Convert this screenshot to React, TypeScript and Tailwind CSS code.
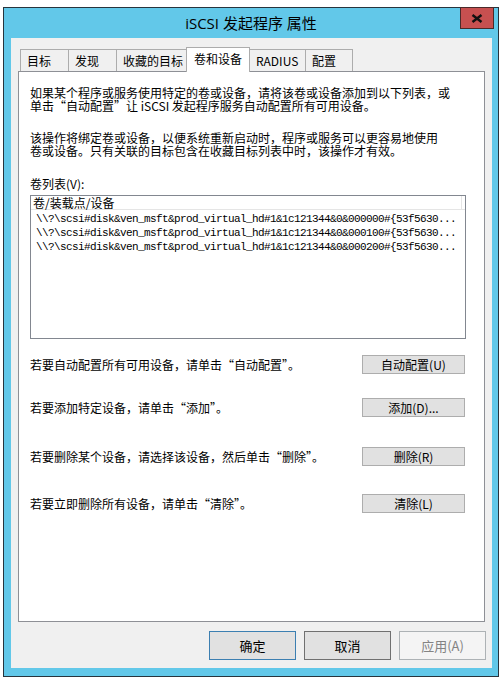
import React from "react";

const cjk = { fontFamily: '"Noto Sans CJK SC", "Noto Sans", sans-serif' };
const ui = { fontFamily: '"Open Sans", "Noto Sans CJK SC", sans-serif' };
const mono = { fontFamily: '"Liberation Mono", "Noto Sans CJK SC", monospace' };

const tabs = [
  { label: "目标", w: "w-[49px]" },
  { label: "发现", w: "w-[49px]" },
  { label: "收藏的目标", w: "w-[71px]" },
  { label: "卷和设备", w: "w-[64px]", active: true },
  { label: "RADIUS", w: "w-[57px]" },
  { label: "配置", w: "w-[48px]" },
];

const volumes = [
  "\\\\?\\scsi#disk&ven_msft&prod_virtual_hd#1&1c121344&0&000000#{53f5630...",
  "\\\\?\\scsi#disk&ven_msft&prod_virtual_hd#1&1c121344&0&000100#{53f5630...",
  "\\\\?\\scsi#disk&ven_msft&prod_virtual_hd#1&1c121344&0&000200#{53f5630...",
];

const actions = [
  { text: "若要自动配置所有可用设备，请单击“自动配置”。", btn: "自动配置(U)", mt: "mt-[16px]" },
  { text: "若要添加特定设备，请单击“添加”。", btn: "添加(D)...", mt: "mt-[24px]" },
  { text: "若要删除某个设备，请选择该设备，然后单击“删除”。", btn: "删除(R)", mt: "mt-[30px]" },
  { text: "若要立即删除所有设备，请单击“清除”。", btn: "清除(L)", mt: "mt-[28px]" },
];

function Lines({ lines, className }: { lines: string[]; className?: string }) {
  return (
    <div className={className}>
      {lines.map((l) => (
        <div key={l} className="h-[13px] leading-[13px] whitespace-nowrap">
          {l}
        </div>
      ))}
    </div>
  );
}

export default function App() {
  return (
    <div className="w-[504px] h-[686px] bg-white pt-[7px] pl-[3px]">
      <div className="relative w-[496px] h-[670px] border border-[#27343d] bg-[#62c8e9] flex flex-col">
        {/* title bar */}
        <div className="h-[30px] flex items-center justify-center text-[15px] text-black" style={ui}>
          iSCSI 发起程序 属性
        </div>
        <div className="absolute top-[-1px] right-[4px] w-[34px] h-[22px] bg-[#c75050] border border-[#4a2a2a] flex items-center justify-center">
          <svg width="12" height="9" viewBox="0 0 12 9">
            <path d="M1.5 1 L10.5 8 M10.5 1 L1.5 8" stroke="#111" strokeWidth="2.4" />
          </svg>
        </div>

        {/* client */}
        <div className="ml-[7px] mr-[6px] h-[630px] bg-[#f0f0f0] flex flex-col px-[7px] pt-[9px]">
          <div className="relative z-10 flex items-end h-[24px] pl-[2px] text-[12px] text-black" style={cjk}>
            {tabs.map((t, i) =>
              t.active ? (
                <div
                  key={t.label}
                  className={`${t.w} h-[25px] -mb-px ${i ? "-ml-px" : ""} bg-white border border-b-0 border-[#acacac] pl-[7px] pt-[3px] leading-[16px]`}
                >
                  {t.label}
                </div>
              ) : (
                <div
                  key={t.label}
                  className={`${t.w} h-[22px] ${i ? "-ml-px" : ""} bg-[#f0f0f0] border border-b-0 border-[#acacac] pl-[6px] pt-[3px] leading-[16px]`}
                >
                  {t.label}
                </div>
              )
            )}
          </div>

          {/* tab panel */}
          <div className="h-[551px] bg-white border border-[#8e9096] pl-[11px] pr-[18px] pt-[14px] text-[12px] text-black" style={cjk}>
            <Lines
              lines={[
                "如果某个程序或服务使用特定的卷或设备，请将该卷或设备添加到以下列表，或",
                "单击“自动配置”让 iSCSI 发起程序服务自动配置所有可用设备。",
              ]}
            />
            <Lines
              className="mt-[19px]"
              lines={[
                "该操作将绑定卷或设备，以便系统重新启动时，程序或服务可以更容易地使用",
                "卷或设备。只有关联的目标包含在收藏目标列表中时，该操作才有效。",
              ]}
            />
            <div className="mt-[20px] h-[13px] leading-[13px]">卷列表(V):</div>

            <div className="mt-[5px] h-[144px] border border-[#828790] bg-white">
              <div className="h-[14px] flex border-b border-[#e5e5e5]">
                <div className="w-[431px] border-r border-[#e5e5e5] pl-[2px] leading-[13px]">卷/装载点/设备</div>
              </div>
              <div className="pt-[2px] pl-[5px]">
                {volumes.map((v) => (
                  <div key={v} className="h-[14px] leading-[14px] text-[11px] tracking-[-0.6px] whitespace-nowrap" style={mono}>
                    {v}
                  </div>
                ))}
              </div>
            </div>

            {actions.map((a) => (
              <div key={a.btn} className={`${a.mt} flex items-center justify-between`}>
                <span className="whitespace-nowrap">{a.text}</span>
                <button className="w-[103px] h-[19px] mr-px bg-[#e1e1e1] border border-[#adadad] text-[12px] leading-[17px] text-center">
                  {a.btn}
                </button>
              </div>
            ))}
          </div>

          {/* dialog buttons */}
          <div className="mt-[9px] -mr-px flex justify-end gap-[8px] text-[13px]" style={cjk}>
            <button className="w-[87px] h-[29px] bg-[#e1e1e1] border border-[#3c7fb1] text-black">确定</button>
            <button className="w-[87px] h-[29px] bg-[#e1e1e1] border border-[#707070] text-black">取消</button>
            <button className="w-[87px] h-[29px] bg-[#f4f4f4] border border-[#adb2b5] text-[#838383]">应用(A)</button>
          </div>
        </div>
      </div>
    </div>
  );
}
